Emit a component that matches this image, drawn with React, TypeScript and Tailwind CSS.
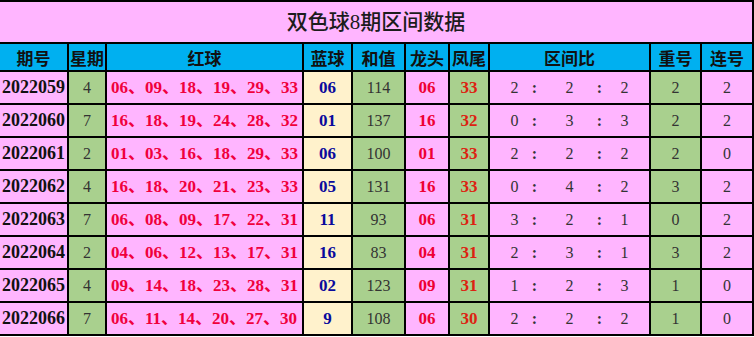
import React from 'react';

type Row = {
  qh: string;
  week: string;
  red: string[];
  blue: string;
  sum: string;
  head: string;
  tail: string;
  ratio: [string, string, string];
  repeat: string;
  consec: string;
};

const rows: Row[] = [
  { qh: '2022059', week: '4', red: ['06', '09', '18', '19', '29', '33'], blue: '06', sum: '114', head: '06', tail: '33', ratio: ['2', '2', '2'], repeat: '2', consec: '2' },
  { qh: '2022060', week: '7', red: ['16', '18', '19', '24', '28', '32'], blue: '01', sum: '137', head: '16', tail: '32', ratio: ['0', '3', '3'], repeat: '2', consec: '2' },
  { qh: '2022061', week: '2', red: ['01', '03', '16', '18', '29', '33'], blue: '06', sum: '100', head: '01', tail: '33', ratio: ['2', '2', '2'], repeat: '2', consec: '0' },
  { qh: '2022062', week: '4', red: ['16', '18', '20', '21', '23', '33'], blue: '05', sum: '131', head: '16', tail: '33', ratio: ['0', '4', '2'], repeat: '3', consec: '2' },
  { qh: '2022063', week: '7', red: ['06', '08', '09', '17', '22', '31'], blue: '11', sum: '93', head: '06', tail: '31', ratio: ['3', '2', '1'], repeat: '0', consec: '2' },
  { qh: '2022064', week: '2', red: ['04', '06', '12', '13', '17', '31'], blue: '16', sum: '83', head: '04', tail: '31', ratio: ['2', '3', '1'], repeat: '3', consec: '2' },
  { qh: '2022065', week: '4', red: ['09', '14', '18', '23', '28', '31'], blue: '02', sum: '123', head: '09', tail: '31', ratio: ['1', '2', '3'], repeat: '1', consec: '0' },
  { qh: '2022066', week: '7', red: ['06', '11', '14', '20', '27', '30'], blue: '9', sum: '108', head: '06', tail: '30', ratio: ['2', '2', '2'], repeat: '1', consec: '0' },
];

const headers = ['期号', '星期', '红球', '蓝球', '和值', '龙头', '凤尾', '区间比', '重号', '连号'];
const widths = [68, 38, 197, 49, 53, 44, 40, 161, 51, 52];

const cell = 'border-2 border-black p-0 text-center align-middle';

export default function App() {
  return (
    <div className="w-[754px] h-[337px] bg-white overflow-hidden font-['Liberation_Serif','Noto_Sans_CJK_SC',serif]">
      <table className="border-collapse table-fixed w-[753px]">
        <colgroup>
          {widths.map((w, i) => (
            <col key={i} style={{ width: w }} />
          ))}
        </colgroup>
        <tbody>
          <tr className="h-[42px]">
            <td colSpan={10} className={`${cell} border-l-0 bg-[#ffb5ff] text-[21px] font-medium text-[#1c1c1c] pt-[2px]`}>
              双色球8期区间数据
            </td>
          </tr>
          <tr className="h-[28px] bg-[#00b0f0]">
            {headers.map((h, i) => (
              <td key={h} className={`${cell} ${i === 0 ? 'border-l-0' : ''} text-[17px] font-bold text-[#111] font-['Noto_Sans_CJK_SC',sans-serif] leading-none`}>
                {h}
              </td>
            ))}
          </tr>
          {rows.map((r) => (
            <tr key={r.qh} className="h-[33px]">
              <td className={`${cell} border-l-0 bg-[#ffb5ff] text-[18px] font-bold text-[#111] text-left pl-[2px]`}>{r.qh}</td>
              <td className={`${cell} bg-[#a9d08e] text-[16px] text-[#333]`}>{r.week}</td>
              <td className={`${cell} bg-[#ffb5ff] text-[17px] font-bold text-[#f0003c] text-left pl-[4px] whitespace-nowrap`}>
                {r.red.join('、')}
              </td>
              <td className={`${cell} bg-[#fff2cc] text-[17px] font-bold text-[#0a0a9c]`}>{r.blue}</td>
              <td className={`${cell} bg-[#a9d08e] text-[16px] text-[#333]`}>{r.sum}</td>
              <td className={`${cell} bg-[#ffb5ff] text-[17px] font-bold text-[#ee0033]`}>{r.head}</td>
              <td className={`${cell} bg-[#a9d08e] text-[17px] font-bold text-[#dd2211]`}>{r.tail}</td>
              <td className={`${cell} bg-[#ffb5ff] text-[16px] text-[#333]`}>
                <div className="flex justify-center items-center">
                  <span className="w-[10px] text-center">{r.ratio[0]}</span>
                  <span className="w-[10px] ml-[10px] text-center font-bold">:</span>
                  <span className="w-[10px] ml-[25px] text-center">{r.ratio[1]}</span>
                  <span className="w-[10px] ml-[20px] text-center font-bold">:</span>
                  <span className="w-[10px] ml-[15px] text-center">{r.ratio[2]}</span>
                </div>
              </td>
              <td className={`${cell} bg-[#a9d08e] text-[16px] text-[#333]`}>{r.repeat}</td>
              <td className={`${cell} bg-[#ffb5ff] text-[16px] text-[#333]`}>{r.consec}</td>
            </tr>
          ))}
        </tbody>
      </table>
    </div>
  );
}
